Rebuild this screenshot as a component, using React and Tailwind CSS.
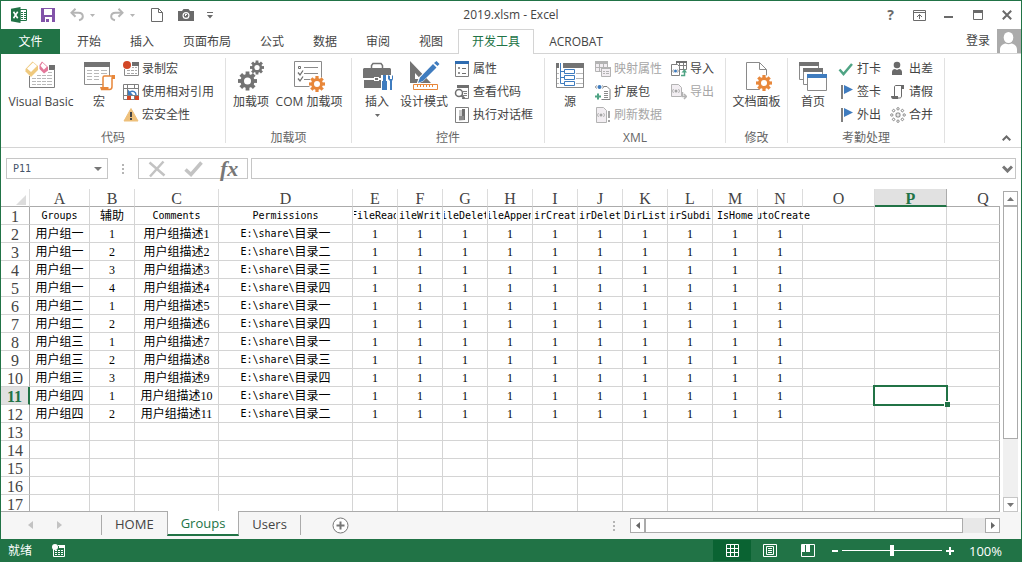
import { useState } from "react";

const COLUMNS = [
  { id: "A", width: "w-[60px]" },
  { id: "B", width: "w-[45px]" },
  { id: "C", width: "w-[84px]" },
  { id: "D", width: "w-[134px]" },
  { id: "E", width: "w-[45px]" },
  { id: "F", width: "w-[45px]" },
  { id: "G", width: "w-[45px]" },
  { id: "H", width: "w-[45px]" },
  { id: "I", width: "w-[45px]" },
  { id: "J", width: "w-[45px]" },
  { id: "K", width: "w-[45px]" },
  { id: "L", width: "w-[45px]" },
  { id: "M", width: "w-[45px]" },
  { id: "N", width: "w-[45px]" },
  { id: "O", width: "w-[72px]" },
  { id: "P", width: "w-[72px]" },
  { id: "Q", width: "" },
];

const HEADERS = [
  "Groups",
  "辅助",
  "Comments",
  "Permissions",
  "FileRead",
  "FileWrite",
  "FileDelete",
  "FileAppend",
  "DirCreate",
  "DirDelete",
  "DirList",
  "DirSubdir",
  "IsHome",
  "AutoCreate",
];

const GROUPS = [
  ["用户组一", 1, "用户组描述1", "目录一"],
  ["用户组一", 2, "用户组描述2", "目录二"],
  ["用户组一", 3, "用户组描述3", "目录三"],
  ["用户组一", 4, "用户组描述4", "目录四"],
  ["用户组二", 1, "用户组描述5", "目录一"],
  ["用户组二", 2, "用户组描述6", "目录四"],
  ["用户组三", 1, "用户组描述7", "目录一"],
  ["用户组三", 2, "用户组描述8", "目录三"],
  ["用户组三", 3, "用户组描述9", "目录四"],
  ["用户组四", 1, "用户组描述10", "目录一"],
  ["用户组四", 2, "用户组描述11", "目录二"],
];

const ROW_NUMBERS = Array.from({ length: 17 }, (_, i) => i + 1);
const ACTIVE = { col: "P", row: 11 };

/* ---------- icons ---------- */

const Svg = ({ w = 16, h = 16, className = "", children }) => (
  <svg
    width={w}
    height={h}
    viewBox={`0 0 ${w} ${h}`}
    fill="none"
    aria-hidden="true"
    className={`shrink-0 ${className}`}
  >
    {children}
  </svg>
);

const Gear = ({ cx, cy, r, hole, fill }) => (
  <g transform={`translate(${cx} ${cy})`}>
    {[0, 45, 90, 135].map((a) => (
      <rect
        key={a}
        x={-r * 0.2}
        y={-r}
        width={r * 0.4}
        height={r * 2}
        fill={fill}
        transform={`rotate(${a})`}
      />
    ))}
    <circle r={r * 0.74} fill={fill} />
    <circle r={hole} fill="#fff" />
  </g>
);

const Caret = ({ color = "#6a6a6a", className = "" }) => (
  <Svg w={5} h={3} className={className}>
    <path d="M0 0h5L2.5 3z" fill={color} />
  </Svg>
);

const ExcelLogo = () => (
  <Svg>
    <path d="M9 2.5h6.5v11H9z" fill="#fff" stroke="#217346" />
    <path
      d="M10 5h2M10 7h2M10 9h2M10 11h2M13 5h2M13 7h2M13 9h2M13 11h2"
      stroke="#217346"
      shapeRendering="crispEdges"
    />
    <path d="M0 1.8 9.5 0v16L0 14.2z" fill="#217346" />
    <path d="m2.5 4.8 4.2 6.4M6.7 4.8l-4.2 6.4" stroke="#fff" strokeWidth="1.6" />
  </Svg>
);

const SaveIcon = () => (
  <Svg w={14} h={14}>
    <path d="M0 0h14v14H0z" fill="#8253a9" />
    <path d="M3 1h8v6H3zM4 9h7v5H4z" fill="#fff" />
    <path d="M5 11h3v3H5z" fill="#8253a9" />
  </Svg>
);

const UndoArrow = () => (
  <>
    <path d="m5.5.8-4 4 4 4" stroke="#b5b5b5" strokeWidth="2" />
    <path
      d="M2 4.8h6.5c2.6 0 4.3 1.5 4.3 3.7 0 1.8-1.3 3.2-3.8 3.7"
      stroke="#b5b5b5"
      strokeWidth="2"
    />
  </>
);

const UndoIcon = () => (
  <Svg w={14} h={14}>
    <UndoArrow />
  </Svg>
);

const RedoIcon = () => (
  <Svg w={14} h={14}>
    <g transform="translate(14 0) scale(-1 1)">
      <UndoArrow />
    </g>
  </Svg>
);

const NewIcon = () => (
  <Svg w={12} h={14}>
    <path d="M.5.5h7l4 4v9H.5zM7.5.5v4h4" stroke="#6a6a6a" />
  </Svg>
);

const CameraIcon = () => (
  <Svg w={16} h={12}>
    <path d="M0 2h4l1.5-2h5L12 2h4v10H0z" fill="#6a6a6a" />
    <circle cx="8" cy="6.5" r="3.5" fill="#fff" />
    <circle cx="8" cy="6.5" r="2.3" fill="#6a6a6a" />
    <path d="M7 5h2v1H8v1H7z" fill="#fff" />
  </Svg>
);

const VisualBasicIcon = () => (
  <Svg w={32} h={32}>
    <path d="M24 5h6v5h-6z" fill="#6f6f6f" />
    <path d="M4.5 16v11.500h25V9" stroke="#7f7f7f" />
    <path
      d="M7 18.5h4M12 15.5h4M17 15.5h4M22 15.5h5M12 18.5h4M17 18.5h4M22 18.5h5M7 21.5h4M12 21.5h4M17 21.5h4M22 21.5h5M7 24.5h4M12 24.5h4M17 24.5h4M22 24.5h5M23 12.5h4"
      stroke="#b9b9b9"
    />
    <path d="M7.5 1.5 13 6v4l-7 7-5.500-5.500V9z" fill="#efc97e" />
    <path d="m8 2.500 4 3.500-6 6-4-3.500z" fill="#fff" />
    <path d="m17 1.500 6 5.500v3.500l-4 3-4.500-4.500V5z" fill="#e3789a" />
    <path d="m17.500 2.800 4.300 4-3 3-3.300-4z" fill="#fff" />
  </Svg>
);

const MacroIcon = () => (
  <Svg w={32} h={32}>
    <path d="M1.5 2.5h25v22h-25z" fill="#fff" stroke="#8a8a8a" />
    <path d="M1 2h26v5H1z" fill="#737373" />
    <path
      d="M4 10.5h5M11 10.5h5M18 10.5h6M4 13.5h5M11 13.5h5M18 13.5h6M4 16.5h5M11 16.5h5M4 19.5h5M11 19.5h5"
      stroke="#b9b9b9"
    />
    <path
      d="M20 27v-9.500c0-1 .8-1.500 1.500-1.500h9c-1 .3-1.500 1-1.500 2v8.500c0 2-1 3-2.500 3H18c1.500 0 2-1 2-2.500z"
      fill="#fff"
      stroke="#e8873a"
      strokeWidth="1.5"
    />
    <path d="M17 27h8.500v3H18zM29 15h3v4h-3z" fill="#e8873a" />
  </Svg>
);

const AddinIcon = () => (
  <Svg w={32} h={32}>
    <Gear cx={12.5} cy={21} r={9.5} hole={3.5} fill="#737373" />
    <Gear cx={22} cy={7.5} r={7} hole={2.6} fill="#737373" />
  </Svg>
);

const ComAddinIcon = () => (
  <Svg w={32} h={32}>
    <path d="M1.5 1.5h27v25h-27z" fill="#fff" stroke="#8a8a8a" />
    <path d="M5.5 6.5h2v2h-2z" stroke="#6f6f6f" />
    <path d="M11 7.5h14M11 13.5h14M11 19.5h6" stroke="#8a8a8a" />
    <path d="m5 12.500 2 2.500 3-4.500M5 18.500l2 2.500 3-4.500" stroke="#6f6f6f" strokeWidth="1.3" />
    <circle cx="24" cy="24" r="8" fill="#fff" />
    <Gear cx={24} cy={24} r={8} hole={3} fill="#e8873a" />
  </Svg>
);

const InsertIcon = () => (
  <Svg w={32} h={32}>
    <path d="M10.500 8V5.500l1.500-2h8l1.500 2V8" stroke="#737373" strokeWidth="1.500" />
    <path d="M2 9l1-1h26l1 1v9H2zM3 20h26v8H3z" fill="#737373" />
    <path d="M13 17h5v4h-5z" fill="#fff" />
    <path d="M14 18h3v2h-3z" fill="#737373" />
    <path d="M20 15h12v15H20z" fill="#fff" />
    <path
      d="M22 15h3v6h-3zM21 21h5v9h-5zM27 15v4l2 2v9h2v-9l1-2v-4l-1 1v3h-2v-3z"
      fill="#3f7cbf"
    />
  </Svg>
);

const DesignIcon = () => (
  <Svg w={32} h={32}>
    <path d="M2 1v22h21zM7 13l5.500 6H7z" fill="#737373" fillRule="evenodd" />
    <path d="M28 .5 32 4.500 15 21.500 8.500 24 11 17z" fill="#fff" />
    <path d="m28.500 1 3 3-2 2-3.500-3zM25 4l3.500 3.500L15 21l-5 2 2-5.500z" fill="#3f7cbf" />
    <path d="M5.5 24.5h24v5h-24z" fill="#fff" stroke="#e8873a" />
    <path d="M9.5 25v2M12.5 25v2M15.5 25v2M18.5 25v2M21.5 25v2M24.5 25v2" stroke="#e8873a" />
  </Svg>
);

const SourceIcon = () => (
  <Svg w={32} h={32}>
    <path d="M2.5 3.5h27v24h-27z" fill="#fff" stroke="#8a8a8a" />
    <path d="M2 3h28v5H2z" fill="#737373" />
    <path d="M22 13.5h7M22 18.5h7M22 23.5h7M3 13.5h2M3 18.5h2M3 23.5h2" stroke="#b9b9b9" />
    <path d="M5 3h4v21H5z" fill="#fff" />
    <path d="M6.500 3v20.500h4M6.500 11.500h4M6.500 17.500h4" stroke="#3f7cbf" />
    <path
      d="M10.5 9.5h10v4h-10zM10.5 15.5h10v4h-10zM10.5 21.5h10v4h-10z"
      fill="#fff"
      stroke="#3f7cbf"
    />
  </Svg>
);

const DocPanelIcon = () => (
  <Svg w={32} h={32}>
    <path d="M5.5 2.5h13l7 7v20h-20zM18.5 2.5v7h7" fill="#fff" stroke="#8a8a8a" />
    <circle cx="23" cy="23" r="8" fill="#fff" />
    <Gear cx={23} cy={23} r={8} hole={3} fill="#e8873a" />
  </Svg>
);

const HomeIcon = () => (
  <Svg w={32} h={32}>
    <path d="M2.5 2.5h19v17h-19z" fill="#fff" stroke="#8a8a8a" />
    <path d="M2 2h20v4H2z" fill="#737373" />
    <path d="M6.5 8.5h19v16h-19z" fill="#fff" stroke="#8a8a8a" />
    <path d="M6 8h20v4H6z" fill="#737373" />
    <path d="M10.5 14.5h19v16h-19z" fill="#fff" stroke="#8a8a8a" />
    <path d="M10 14h20v4H10z" fill="#3f7cbf" />
  </Svg>
);

const RecordIcon = () => (
  <Svg>
    <path d="M1.5 8v6.500h14v-13H9" fill="#fff" stroke="#8a8a8a" />
    <path d="M9 1h7v4H9z" fill="#6f6f6f" />
    <path
      d="M9 6.5h2M12 6.5h2M4 9.5h3M8 9.5h3M12 9.5h2M4 12.5h3M8 12.5h3M12 12.5h2"
      stroke="#a9a9a9"
    />
    <circle cx="4" cy="4" r="4" fill="#d24726" />
  </Svg>
);

const RelativeIcon = () => (
  <Svg>
    <path
      d="M.5.5h15v15H.5zM.5 4.5h15M.5 11.5h15M4.5.5v15M11.5.5v15"
      fill="#fff"
      stroke="#7f7f7f"
    />
    <path d="M4 12h4v4H4zM12 12h4v4h-4z" fill="#d24726" />
    <path d="M5 5h9v6H5z" fill="#fff" />
    <path d="M13 11c0-3-3-5-6.500-2.500" stroke="#3f7cbf" strokeWidth="1.5" />
    <path d="M5 5.500V11h5z" fill="#3f7cbf" />
  </Svg>
);

const WarnIcon = () => (
  <Svg>
    <path d="M8 1.500 15 14H1z" fill="#eec07b" stroke="#eec07b" strokeLinejoin="round" />
    <path d="M7 5h2v5H7zM7 11h2v2H7z" fill="#444" />
  </Svg>
);

const PropertyIcon = () => (
  <Svg>
    <path d="M1.5.5h13v15h-13z" fill="#fff" stroke="#7f7f7f" />
    <path d="M1 0h14v3H1z" fill="#2f6cb0" />
    <path d="M4.5 6.5h1v1h-1zM4.5 11.5h1v1h-1z" stroke="#6f6f6f" />
    <path d="M8 7.5h4M8 12.5h4" stroke="#6f6f6f" />
  </Svg>
);

const ViewCodeIcon = () => (
  <Svg>
    <path d="M3.5 4V1.500h11v13H8" fill="#fff" stroke="#7f7f7f" />
    <path d="M3 1h12v3H3z" fill="#6f6f6f" />
    <path d="M9 7.5h4M10 9.5h3M9 11.5h4" stroke="#7f7f7f" />
    <circle cx="5" cy="9" r="3.5" fill="#fff" stroke="#6f6f6f" strokeWidth="1.5" />
    <path d="m7.500 11.500 3 3" stroke="#6f6f6f" strokeWidth="2" />
  </Svg>
);

const DialogIcon = () => (
  <Svg>
    <path d="M1.5.5h13v15h-13z" fill="#fff" stroke="#7f7f7f" />
    <path d="M5 3h6v10l-6 1z" fill="#c9c9c9" />
    <path d="M8 2h3v11H8z" fill="#6f6f6f" />
    <path d="M5 9h5v4H5z" fill="#8a8a8a" />
  </Svg>
);

const MapPropIcon = () => (
  <Svg>
    <path d="M.5.5h12v10H.5zM.5 6.5h12M4.5 3v8M8.5 3v8" fill="#f2eef2" stroke="#b3b3b3" />
    <path d="M0 0h13v3H0z" fill="#b3b3b3" />
    <path d="M6.5 6.5h9v9h-9z" fill="#f2eef2" stroke="#b3b3b3" />
    <path d="M6 6h10v2H6z" fill="#b3b3b3" />
    <path d="M8 10.5h2M11 10.5h3M8 12.5h2M11 12.5h3" stroke="#b3b3b3" />
  </Svg>
);

const ExpandIcon = () => (
  <Svg>
    <path d="M9 2.5h3l3 3v10H6.500" fill="#fff" stroke="#7f7f7f" />
    <path d="M9 7.5h4M9 9.5h4M9 11.5h4M9 13.5h4" stroke="#8a8a8a" />
    <circle cx="4.500" cy="3" r="2" fill="#3f7cbf" />
    <path d="M1.500 1.500.5 3l1 1.500M7.500 1.500l1 1.500-1 1.500" stroke="#7f7f7f" />
    <path d="M3 9.500v6M0 12.500h6" stroke="#4fa484" strokeWidth="2" />
  </Svg>
);

const RefreshIcon = () => (
  <Svg>
    <path d="M1.5.5h7l3 3v12h-10z" fill="#f2eef2" stroke="#b3b3b3" />
    <circle cx="6" cy="8" r="1.5" fill="#a5a5a5" />
    <path d="m3.500 6-1 2 1 2M8.500 6l1 2-1 2" stroke="#b3b3b3" />
    <path d="M12 3h4v13h-4z" fill="#fff" />
    <path d="M13 4h2v7h-2zM13 13h2v2h-2z" fill="#a5a5a5" />
  </Svg>
);

const ImportIcon = () => (
  <Svg>
    <path d="M5.5.5h10v8h-10zM6 4.5h9M8.500 2v7M12.500 2v7" fill="#fff" stroke="#7f7f7f" />
    <path d="M5 0h11v2H5z" fill="#6f6f6f" />
    <path d="M.5 3.500h6l2 2v9h-8z" fill="#fff" stroke="#7f7f7f" />
    <circle cx="4.500" cy="10" r="1.500" fill="#3f7cbf" />
    <path d="m2.500 8.500-.8 1.500.8 1.500M6.500 8.500l.8 1.500-.8 1.500" stroke="#7f7f7f" strokeWidth=".8" />
    <path d="M10 14.500h3.500V10" stroke="#4fa484" strokeWidth="1.5" />
    <path d="M10.500 11.500 13.500 8l2.500 3.500z" fill="#4fa484" />
  </Svg>
);

const ExportIcon = () => (
  <Svg>
    <path d="M.5.5h7l3 3v9H.5z" fill="#f2eef2" stroke="#b3b3b3" />
    <circle cx="5" cy="7" r="1.5" fill="#a5a5a5" />
    <path d="m2.500 5-1 2 1 2M7.500 5l1 2-1 2" stroke="#b3b3b3" />
    <path d="M11.500 8v4.500H15M13 10l2.500 2.500L13 15" stroke="#b3b3b3" strokeWidth="1.5" />
  </Svg>
);

const CheckIcon = () => (
  <Svg>
    <path d="m1.500 8.500 4 4.500L14 3" stroke="#4fa484" strokeWidth="2.5" />
  </Svg>
);

const FlagIcon = () => (
  <Svg>
    <path d="M3 1h2v14H3z" fill="#7f7f7f" />
    <path d="m6 1 9 4.500L6 10z" fill="#3f7cbf" />
  </Svg>
);

const PersonIcon = () => (
  <Svg>
    <circle cx="7" cy="4" r="3.3" fill="#6a6a6a" />
    <path d="M2 14v-3c0-2 1.500-3 3-3l2 1 2-1c1.500 0 3 1 3 3v3z" fill="#6a6a6a" />
  </Svg>
);

const ScrollIcon = () => (
  <Svg>
    <path
      d="M4.5 12V3c0-1 .5-1.500 1.500-1.500h7c-1 .3-1.500 1-1.500 2V12c0 1.500-.8 2-2 2H3"
      stroke="#6a6a6a"
    />
    <path d="M1 12h7v3H3c-1 0-2-1-2-3zM11 1h3v4h-3z" fill="#6a6a6a" />
  </Svg>
);

const MergeIcon = () => (
  <Svg>
    {[0, 45, 90, 135, 180, 225, 270, 315].map((a) => (
      <g key={a} transform={`rotate(${a} 8 8)`}>
        <circle cx="8" cy="1.8" r="1.2" stroke="#7f7f7f" strokeWidth=".9" />
        <path d="M8 5v2" stroke="#8a8a8a" />
      </g>
    ))}
  </Svg>
);

/* ---------- title bar ---------- */

const TitleBar = () => (
  <header className="grid h-7 shrink-0 grid-cols-[1fr_auto_1fr] items-center">
    <div className="flex items-center pl-[10px]">
      <ExcelLogo />
      <button aria-label="保存" className="ml-3.5">
        <SaveIcon />
      </button>
      <button aria-label="撤消" className="ml-[15px] flex items-center gap-1.5">
        <UndoIcon />
        <Caret color="#b5b5b5" />
      </button>
      <button aria-label="恢复" className="ml-[15px] flex items-center gap-1.5">
        <RedoIcon />
        <Caret color="#b5b5b5" />
      </button>
      <button aria-label="新建" className="ml-4">
        <NewIcon />
      </button>
      <button aria-label="照相机" className="ml-[15px]">
        <CameraIcon />
      </button>
      <button aria-label="自定义快速访问工具栏" className="ml-[13px]">
        <Svg w={6} h={7}>
          <path d="M0 .5h6" stroke="#6a6a6a" />
          <path d="M0 3h6L3 6.5z" fill="#6a6a6a" />
        </Svg>
      </button>
    </div>
    <h1>2019.xlsm - Excel</h1>
    <div className="flex justify-end">
      <button
        aria-label="帮助"
        className="flex w-[29px] items-center justify-center text-[14px] leading-5 font-bold text-[#6a6a6a]"
      >
        ?
      </button>
      <button aria-label="功能区显示选项" className="flex w-[29px] items-center justify-center">
        <Svg w={13} h={11}>
          <path d="M.5.5h12v10H.5zM1 2.5h11" stroke="#6a6a6a" />
          <path d="M6.5 9V4.500M4 7l2.500-2.500L9 7" stroke="#6a6a6a" />
        </Svg>
      </button>
      <button aria-label="最小化" className="flex w-[29px] items-center justify-center">
        <Svg w={9} h={11}>
          <path d="M0 6h9v2H0z" fill="#6a6a6a" />
        </Svg>
      </button>
      <button aria-label="最大化" className="flex w-[29px] items-center justify-center">
        <Svg w={10} h={10}>
          <path d="M.5.5h9v9h-9z" stroke="#6a6a6a" />
          <path d="M0 0h10v3H0z" fill="#6a6a6a" />
        </Svg>
      </button>
      <button aria-label="关闭" className="flex w-[29px] items-center justify-center">
        <Svg w={10} h={10}>
          <path d="m.8.8 8.4 8.4M9.2.8.8 9.2" stroke="#6a6a6a" strokeWidth="2" />
        </Svg>
      </button>
    </div>
  </header>
);

/* ---------- ribbon ---------- */

const RIBBON_TABS = ["开始", "插入", "页面布局", "公式", "数据", "审阅", "视图", "开发工具", "ACROBAT"];

const RibbonTabs = () => (
  <nav className="flex h-[25px] shrink-0 items-stretch border-b border-[#d4d4d4] whitespace-nowrap">
    <button className="-mb-px w-[59px] bg-[#217346] text-white">文件</button>
    <div className="ml-[3px] flex gap-px">
      {RIBBON_TABS.map((tab) => (
        <button
          key={tab}
          className={
            tab === "开发工具"
              ? "-mb-px border-x border-t border-[#d4d4d4] bg-white px-[13px] text-[#217346]"
              : "border-x border-t border-transparent px-[13px]"
          }
        >
          {tab}
        </button>
      ))}
    </div>
    <button className="mr-[7px] ml-auto">登录</button>
    <Svg w={24} h={24}>
      <path d="M0 0h24v24H0z" fill="#ababab" />
      <ellipse cx="11.5" cy="8.500" rx="4.800" ry="5.500" fill="#fff" />
      <path
        d="M3 24v-3.500c0-3.500 2.500-5.500 5.500-6 2 1 4 1 6 0 3 .5 5.500 2.500 5.500 6V24z"
        fill="#fff"
      />
    </Svg>
  </nav>
);

const BigButton = ({ icon, label, width, menu }) => (
  <button
    className={`flex h-[69px] shrink-0 flex-col items-center pt-[3px] whitespace-nowrap ${width}`}
  >
    {icon}
    <span className="leading-5">{label}</span>
    {menu && <Caret className="mt-0.5" />}
  </button>
);

const SmallButton = ({ icon, label, disabled }) => (
  <button
    disabled={disabled}
    className={`flex h-[23px] items-center gap-[3px] whitespace-nowrap ${disabled ? "text-[#a6a6a6]" : ""}`}
  >
    {icon}
    <span>{label}</span>
  </button>
);

const RibbonGroup = ({ label, children }) => (
  <>
    <section aria-label={label} className="flex flex-col pt-[3px]">
      <div className="flex">{children}</div>
      <p className="text-center leading-6 text-[#666]">{label}</p>
    </section>
    <div className="my-1 w-px bg-[#e1e1e1]" />
  </>
);

const Ribbon = () => (
  <div className="flex h-[94px] shrink-0 border-b border-[#d4d4d4]">
    <RibbonGroup label="代码">
      <BigButton icon={<VisualBasicIcon />} label="Visual Basic" width="w-20" />
      <BigButton icon={<MacroIcon />} label="宏" width="w-9" />
      <div className="mr-[11px] ml-[6px]">
        <SmallButton icon={<RecordIcon />} label="录制宏" />
        <SmallButton icon={<RelativeIcon />} label="使用相对引用" />
        <SmallButton icon={<WarnIcon />} label="宏安全性" />
      </div>
    </RibbonGroup>
    <RibbonGroup label="加载项">
      <div className="mr-[5px] ml-1 flex">
        <BigButton icon={<AddinIcon />} label="加载项" width="w-[42px]" />
        <BigButton icon={<ComAddinIcon />} label="COM 加载项" width="w-[74px]" />
      </div>
    </RibbonGroup>
    <RibbonGroup label="控件">
      <div className="ml-2 flex">
        <BigButton icon={<InsertIcon />} label="插入" width="w-[34px]" menu />
        <BigButton icon={<DesignIcon />} label="设计模式" width="w-[60px]" />
      </div>
      <div className="mr-[11px]">
        <SmallButton icon={<PropertyIcon />} label="属性" />
        <SmallButton icon={<ViewCodeIcon />} label="查看代码" />
        <SmallButton icon={<DialogIcon />} label="执行对话框" />
      </div>
    </RibbonGroup>
    <RibbonGroup label="XML">
      <BigButton icon={<SourceIcon />} label="源" width="w-[50px]" />
      <div>
        <SmallButton icon={<MapPropIcon />} label="映射属性" disabled />
        <SmallButton icon={<ExpandIcon />} label="扩展包" />
        <SmallButton icon={<RefreshIcon />} label="刷新数据" disabled />
      </div>
      <div className="mr-[11px] ml-[9px]">
        <SmallButton icon={<ImportIcon />} label="导入" />
        <SmallButton icon={<ExportIcon />} label="导出" disabled />
      </div>
    </RibbonGroup>
    <RibbonGroup label="修改">
      <BigButton icon={<DocPanelIcon />} label="文档面板" width="w-[61px]" />
    </RibbonGroup>
    <RibbonGroup label="考勤处理">
      <BigButton icon={<HomeIcon />} label="首页" width="w-[50px]" />
      <div>
        <SmallButton icon={<CheckIcon />} label="打卡" />
        <SmallButton icon={<FlagIcon />} label="签卡" />
        <SmallButton icon={<FlagIcon />} label="外出" />
      </div>
      <div className="mr-[11px] ml-[9px]">
        <SmallButton icon={<PersonIcon />} label="出差" />
        <SmallButton icon={<ScrollIcon />} label="请假" />
        <SmallButton icon={<MergeIcon />} label="合并" />
      </div>
    </RibbonGroup>
    <button aria-label="折叠功能区" className="mr-[10px] mb-1.5 ml-auto self-end">
      <Svg w={9} h={6}>
        <path d="m.7 5.3 3.8-3.8 3.8 3.8" stroke="#6a6a6a" strokeWidth="2" />
      </Svg>
    </button>
  </div>
);

/* ---------- formula bar ---------- */

const FormulaBar = ({ value, onChange }) => (
  <div className="flex h-[41px] shrink-0 items-center pr-[5px] pl-[5px]">
    <div className="flex h-[21px] w-[102px] items-center border border-[#c6c6c6]">
      <input
        aria-label="名称框"
        defaultValue="P11"
        className="w-20 pt-px pl-1.5 font-['DejaVu_Sans_Mono',monospace] text-[10px] text-[#44546a] outline-none"
      />
      <button aria-label="名称列表" className="ml-auto pr-[5px]">
        <Svg w={8} h={4}>
          <path d="M0 0h8L4 4z" fill="#777" />
        </Svg>
      </button>
    </div>
    <Svg w={30} h={12}>
      <path d="M14 1h2v2h-2zM14 5h2v2h-2zM14 9h2v2h-2z" fill="#b5b5b5" />
    </Svg>
    <div className="flex h-[21px] w-[110px] items-center border border-[#c6c6c6] pl-[9px]">
      <button aria-label="取消">
        <Svg w={18} h={18}>
          <path d="m1.500 2.500 15 13M15.500 1.500 2 16.500" stroke="#c3c3c3" strokeWidth="2.5" />
        </Svg>
      </button>
      <button aria-label="输入" className="ml-[18px]">
        <Svg w={19} h={18}>
          <path d="m1.500 9.500 5.500 5L17.500 2.500" stroke="#c3c3c3" strokeWidth="3.5" />
        </Svg>
      </button>
      <button
        aria-label="插入函数"
        className="ml-[17px] font-['Liberation_Serif',serif] text-[22px] leading-[18px] font-bold text-[#777] italic"
      >
        fx
      </button>
    </div>
    <div className="ml-[3px] flex h-[21px] flex-1 items-center border border-[#c6c6c6]">
      <input
        aria-label="编辑栏"
        value={value}
        onChange={(e) => onChange(e.target.value)}
        className="min-w-0 flex-1 px-1 outline-none"
      />
      <button aria-label="展开编辑栏" className="pr-0.5">
        <Svg w={11} h={8}>
          <path d="M1 1.500 5.500 6 10 1.500" stroke="#777" strokeWidth="3" />
        </Svg>
      </button>
    </div>
  </div>
);

/* ---------- sheet ---------- */

const Latin = ({ children }) => (
  <span className="font-['DejaVu_Sans_Mono',monospace] text-[10px]">{children}</span>
);

const cellContent = (row, col) => {
  if (row === 1) {
    const text = HEADERS[col];
    if (!text) return null;
    return col === 1 ? text : <Latin>{text}</Latin>;
  }
  const record = GROUPS[row - 2];
  if (!record || col > 13) return null;
  if (col === 3) {
    return (
      <>
        <Latin>{"E:\\share\\"}</Latin>
        {record[3]}
      </>
    );
  }
  return col < 3 ? record[col] : 1;
};

const Cell = ({ row, col }) => {
  const last = col === COLUMNS.length - 1;
  // AutoCreate spills over the empty cell on its right
  const spill = row === 1 && col === 13;
  const active = COLUMNS[col].id === ACTIVE.col && row === ACTIVE.row;
  return (
    <td
      colSpan={spill ? 2 : 1}
      className={`h-[18px] border-r border-b border-b-[#d4d4d4] p-0 ${last ? "border-r-[#ababab]" : "border-r-[#d4d4d4]"} ${active ? "relative" : "overflow-hidden"}`}
    >
      <div
        className={`flex h-[17px] items-center justify-center pt-px whitespace-nowrap ${spill ? "w-11" : "mx-px overflow-hidden"}`}
      >
        {cellContent(row, col)}
      </div>
      {active && (
        <div className="absolute -inset-0.5 border-2 border-[#217346]">
          <div className="absolute -right-[4px] -bottom-[3px] size-[6px] border-t border-l border-white bg-[#217346]" />
        </div>
      )}
    </td>
  );
};

const Grid = () => (
  <div className="min-w-0 flex-1 overflow-hidden border-b border-[#ababab]">
    <table className="w-full table-fixed border-separate border-spacing-0 font-['Liberation_Serif','Noto_Sans_CJK_SC',serif] text-[12px] leading-4 text-black">
      <colgroup>
        <col className="w-[29px]" />
        {COLUMNS.map((c) => (
          <col key={c.id} className={c.width} />
        ))}
      </colgroup>
      <thead>
        <tr>
          <th className="h-[18px] border-r border-b border-r-[#e1e1e1] border-b-[#ababab] p-0">
            <Svg w={10} h={10} className="mt-1 mr-[3px] ml-auto">
              <path d="M10 0v10H0z" fill="#dcdcdc" />
            </Svg>
          </th>
          {COLUMNS.map((c) => (
            <th
              key={c.id}
              className={`h-[18px] overflow-hidden p-0 text-[16px] ${
                c.id === ACTIVE.col
                  ? "border-r border-b-2 border-r-[#ababab] border-b-[#217346] bg-[#e1e1e1] font-bold text-[#217346]"
                  : c.id === "Q"
                    ? "border-b border-b-[#ababab] font-normal text-[#444]"
                    : "border-r border-b border-r-[#dcdcdc] border-b-[#ababab] font-normal text-[#444]"
              }`}
            >
              <div
                className={`flex h-4 items-center justify-center pt-[3px] ${c.id === "Q" ? "w-[72px]" : ""}`}
              >
                {c.id}
              </div>
            </th>
          ))}
        </tr>
      </thead>
      <tbody>
        {ROW_NUMBERS.map((n) => (
          <tr key={n}>
            <th
              className={`h-[18px] border-b border-b-[#d4d4d4] p-0 text-[16px] ${
                n === ACTIVE.row
                  ? "border-r-2 border-r-[#217346] bg-[#e1e1e1] font-bold text-[#217346]"
                  : "border-r border-r-[#ababab] font-normal text-[#444]"
              }`}
            >
              <div className="flex h-[17px] items-center justify-center pt-0.5">{n}</div>
            </th>
            {COLUMNS.map((c, i) =>
              n === 1 && i === 14 ? null : <Cell key={c.id} row={n} col={i} />
            )}
          </tr>
        ))}
      </tbody>
    </table>
  </div>
);

const VerticalScroll = () => (
  <div className="flex w-[21px] shrink-0 flex-col items-start pt-0.5 pl-[3px]">
    <button
      aria-label="向上滚动"
      className="flex h-[15px] w-[15px] shrink-0 items-center justify-center border border-[#ababab] bg-white"
    >
      <Svg w={7} h={4}>
        <path d="M3.5 0 7 4H0z" fill="#777" />
      </Svg>
    </button>
    <div className="w-[15px] flex-1 bg-[#f0f0f0]">
      <div className="h-4/5 w-full border border-[#ababab] bg-white" />
    </div>
    <button
      aria-label="向下滚动"
      className="flex h-[15px] w-[15px] shrink-0 items-center justify-center border border-[#c6c6c6] bg-white"
    >
      <Svg w={7} h={4}>
        <path d="M0 0h7L3.5 4z" fill="#777" />
      </Svg>
    </button>
  </div>
);

const SheetTabs = ({ sheet, onSelect }) => (
  <div className="flex h-[27px] shrink-0 bg-[#f6f6f6]">
    <div className="flex w-[100px] items-center gap-6 pb-0.5 pl-[27px]">
      <button aria-label="上一个工作表">
        <Svg w={5} h={8}>
          <path d="M5 0v8L0 4z" fill="#c3c3c3" />
        </Svg>
      </button>
      <button aria-label="下一个工作表">
        <Svg w={5} h={8}>
          <path d="M0 0v8l5-4z" fill="#c3c3c3" />
        </Svg>
      </button>
    </div>
    <div className="flex items-start text-[13px]">
      <div className="mt-[3px] h-5 w-px bg-[#ababab]" />
      {["HOME", "Groups", "Users"].map((name) => (
        <button
          key={name}
          onClick={() => onSelect(name)}
          className={
            name === sheet
              ? "z-10 -mt-px h-[25px] border-x border-b-2 border-x-[#ababab] border-b-[#217346] bg-white px-[13px] text-[#217346]"
              : "h-6 px-[13px]"
          }
        >
          {name}
        </button>
      ))}
      <div className="mt-[3px] h-5 w-px bg-[#ababab]" />
    </div>
    <button aria-label="新工作表" className="ml-[31px]">
      <Svg w={17} h={17}>
        <circle cx="8.5" cy="8.5" r="7.5" fill="#fff" stroke="#777" />
        <path d="M8.5 4.5v8M4.5 8.5h8" stroke="#777" strokeWidth="2" />
      </Svg>
    </button>
    <div className="ml-auto flex items-center pr-[21px]">
      <Svg w={2} h={10} className="mr-[15px]">
        <path d="M0 0h2v2H0zM0 4h2v2H0zM0 8h2v2H0z" fill="#b5b5b5" />
      </Svg>
      <button
        aria-label="向左滚动"
        className="flex h-[15px] w-[15px] items-center justify-center border border-[#ababab] bg-white"
      >
        <Svg w={4} h={7}>
          <path d="M4 0v7L0 3.5z" fill="#666" />
        </Svg>
      </button>
      <div className="h-[15px] w-[340px] bg-[#e8e8e8]">
        <div className="h-full w-[318px] border border-[#ababab] bg-white" />
      </div>
      <button
        aria-label="向右滚动"
        className="flex h-[15px] w-[15px] items-center justify-center border border-[#ababab] bg-white"
      >
        <Svg w={4} h={7}>
          <path d="M0 0v7l4-3.5z" fill="#666" />
        </Svg>
      </button>
    </div>
  </div>
);

/* ---------- status bar ---------- */

const StatusBar = ({ zoom, onZoom }) => (
  <footer className="flex h-[23px] shrink-0 items-center bg-[#217346] pl-[7px] text-white">
    <span>就绪</span>
    <button aria-label="录制宏" className="ml-5">
      <Svg w={14} h={13}>
        <path d="M1.5 5v7.500h11v-11H6" stroke="#fff" />
        <path d="M7 1h6v3H7z" fill="#fff" />
        <path
          d="M3 6.5h2M6 6.5h2M9 6.5h2M3 8.5h2M6 8.5h2M9 8.5h2M3 10.5h2M6 10.5h2M9 10.5h2"
          stroke="#fff"
        />
        <circle cx="3" cy="3" r="3" fill="#fff" />
      </Svg>
    </button>
    <div className="ml-auto flex h-full items-center">
      <button
        aria-label="普通"
        className="flex h-[21px] w-[38px] items-center justify-center bg-[#0a6332]"
      >
        <Svg w={13} h={13}>
          <path d="M.5.5h12v12H.5zM.5 4.5h12M.5 8.5h12M4.5.5v12M8.5.5v12" stroke="#fff" />
        </Svg>
      </button>
      <button aria-label="页面布局" className="flex h-[21px] w-[38px] items-center justify-center">
        <Svg w={14} h={13}>
          <path
            d="M.5.5h13v12H.5zM3.5 2.5h7v8h-7zM5 4.5h4M5 6.5h4M5 8.5h4"
            stroke="#fff"
          />
        </Svg>
      </button>
      <button aria-label="分页预览" className="flex h-[21px] w-[38px] items-center justify-center">
        <Svg w={14} h={13}>
          <path d="M.5.5h13v12H.5z" stroke="#fff" />
          <path d="M1 1h3v7H1zM5 1h4v7H5z" fill="#fff" />
        </Svg>
      </button>
      <button aria-label="缩小" className="ml-[5px]">
        <Svg w={6} h={8}>
          <path d="M0 3h6v2H0z" fill="#fff" />
        </Svg>
      </button>
      <input
        type="range"
        aria-label="显示比例"
        min="0"
        max="200"
        value={zoom}
        onChange={(e) => onZoom(Number(e.target.value))}
        className="mx-1 h-3 w-[100px] appearance-none bg-transparent bg-[linear-gradient(#fff,#fff)] bg-[length:100%_1px] bg-center bg-no-repeat [&::-webkit-slider-thumb]:h-[11px] [&::-webkit-slider-thumb]:w-1 [&::-webkit-slider-thumb]:appearance-none [&::-webkit-slider-thumb]:bg-white"
      />
      <button aria-label="放大">
        <Svg w={8} h={8}>
          <path d="M0 3h8v2H0zM3 0h2v8H3z" fill="#fff" />
        </Svg>
      </button>
      <span className="w-[67px] pl-[15px] text-[13px]">{zoom}%</span>
    </div>
  </footer>
);

export default function App() {
  const [formula, setFormula] = useState("");
  const [sheet, setSheet] = useState("Groups");
  const [zoom, setZoom] = useState(100);

  return (
    <div className="flex h-screen flex-col overflow-hidden border-x border-t border-[#217346] bg-white font-['Open_Sans','Noto_Sans_CJK_SC',sans-serif] text-[12px] leading-4 text-[#444]">
      <TitleBar />
      <RibbonTabs />
      <Ribbon />
      <FormulaBar value={formula} onChange={setFormula} />
      <main className="flex min-h-0 flex-1">
        <Grid />
        <VerticalScroll />
      </main>
      <SheetTabs sheet={sheet} onSelect={setSheet} />
      <StatusBar zoom={zoom} onZoom={setZoom} />
    </div>
  );
}
